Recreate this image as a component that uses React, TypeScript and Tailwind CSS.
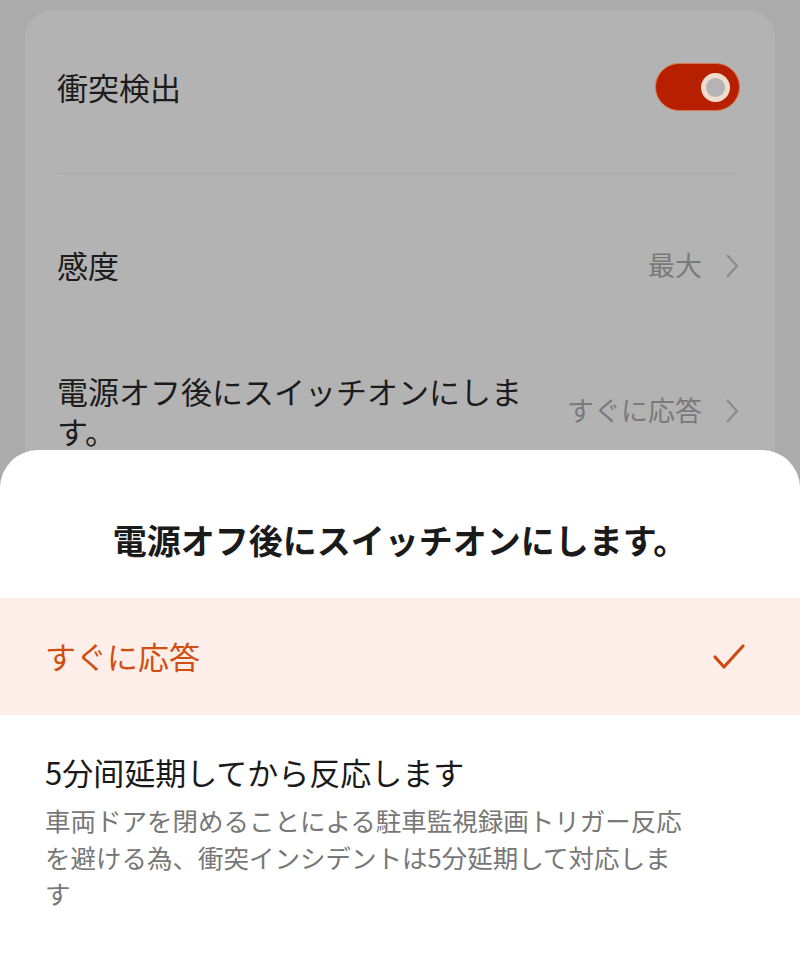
import React from "react";

const font = { fontFamily: '"Noto Sans CJK JP", "Noto Sans", sans-serif' };

function Chevron() {
  return (
    <svg width="16" height="26" viewBox="0 0 16 26" className="ml-[22px]">
      <polyline points="3,2 13,13 3,24" fill="none" stroke="#8a8a8a" strokeWidth="2" />
    </svg>
  );
}

export default function App() {
  return (
    <div className="relative w-[800px] h-[962px] overflow-hidden bg-[#ababab]" style={font}>
      {/* dimmed page */}
      <div className="mx-[25px] mt-[10px] rounded-[28px] bg-[#b3b3b3] pl-[32px] pr-[35px] pb-[40px]">
        <div className="flex h-[154px] items-center justify-between">
          <span className="text-[31px] text-[#1c1c1c]">衝突検出</span>
          <div className="flex h-[48px] w-[85px] items-center justify-end rounded-full border border-[#d9764f] bg-[#b62000] pr-[9px]">
            <div className="h-[29px] w-[29px] rounded-full border-[5px] border-[#efdccf] bg-[#b4b4b4]" />
          </div>
        </div>
        <div className="mt-[9px] h-px bg-[#a9a9a9]" />
        <div className="mt-[19px] flex h-[145px] items-center justify-between">
          <span className="text-[31px] text-[#1c1c1c]">感度</span>
          <div className="flex items-center">
            <span className="text-[27px] text-[#7a7a7a]">最大</span>
            <Chevron />
          </div>
        </div>
        <div className="flex h-[145px] items-center justify-between">
          <span className="text-[31px] leading-[40px] text-[#1c1c1c]">
            電源オフ後にスイッチオンにしま
            <br />
            す。
          </span>
          <div className="flex items-center">
            <span className="text-[27px] text-[#7a7a7a]">すぐに応答</span>
            <Chevron />
          </div>
        </div>
      </div>

      {/* bottom sheet */}
      <div className="absolute left-0 right-0 top-[450px] bottom-0 rounded-t-[38px] bg-white">
        <div className="h-[148px] pt-[67px] text-center">
          <span className="text-[34px] font-bold leading-[46px] text-[#1a1a1a]">
            電源オフ後にスイッチオンにします。
          </span>
        </div>
        <div className="flex h-[117px] items-center justify-between bg-[#fdeee9] pl-[45px] pr-[54px]">
          <span className="text-[31px] text-[#cf4e10]">すぐに応答</span>
          <svg width="34" height="28" viewBox="0 0 34 28">
            <polyline
              points="3,14 12,24 31,3"
              fill="none"
              stroke="#cf4a12"
              strokeWidth="3.2"
              strokeLinecap="round"
              strokeLinejoin="round"
            />
          </svg>
        </div>
        <div className="pl-[45px] pt-[37px]">
          <div className="text-[31px] leading-[40px] text-[#1a1a1a]">5分间延期してから反応します</div>
          <div className="mt-[10px] text-[25.5px] leading-[36.5px] text-[#777777]">
            車両ドアを閉めることによる駐車監視録画トリガー反応
            <br />
            を避ける為、衝突インシデントは5分延期して対応しま
            <br />
            す
          </div>
        </div>
      </div>
    </div>
  );
}
